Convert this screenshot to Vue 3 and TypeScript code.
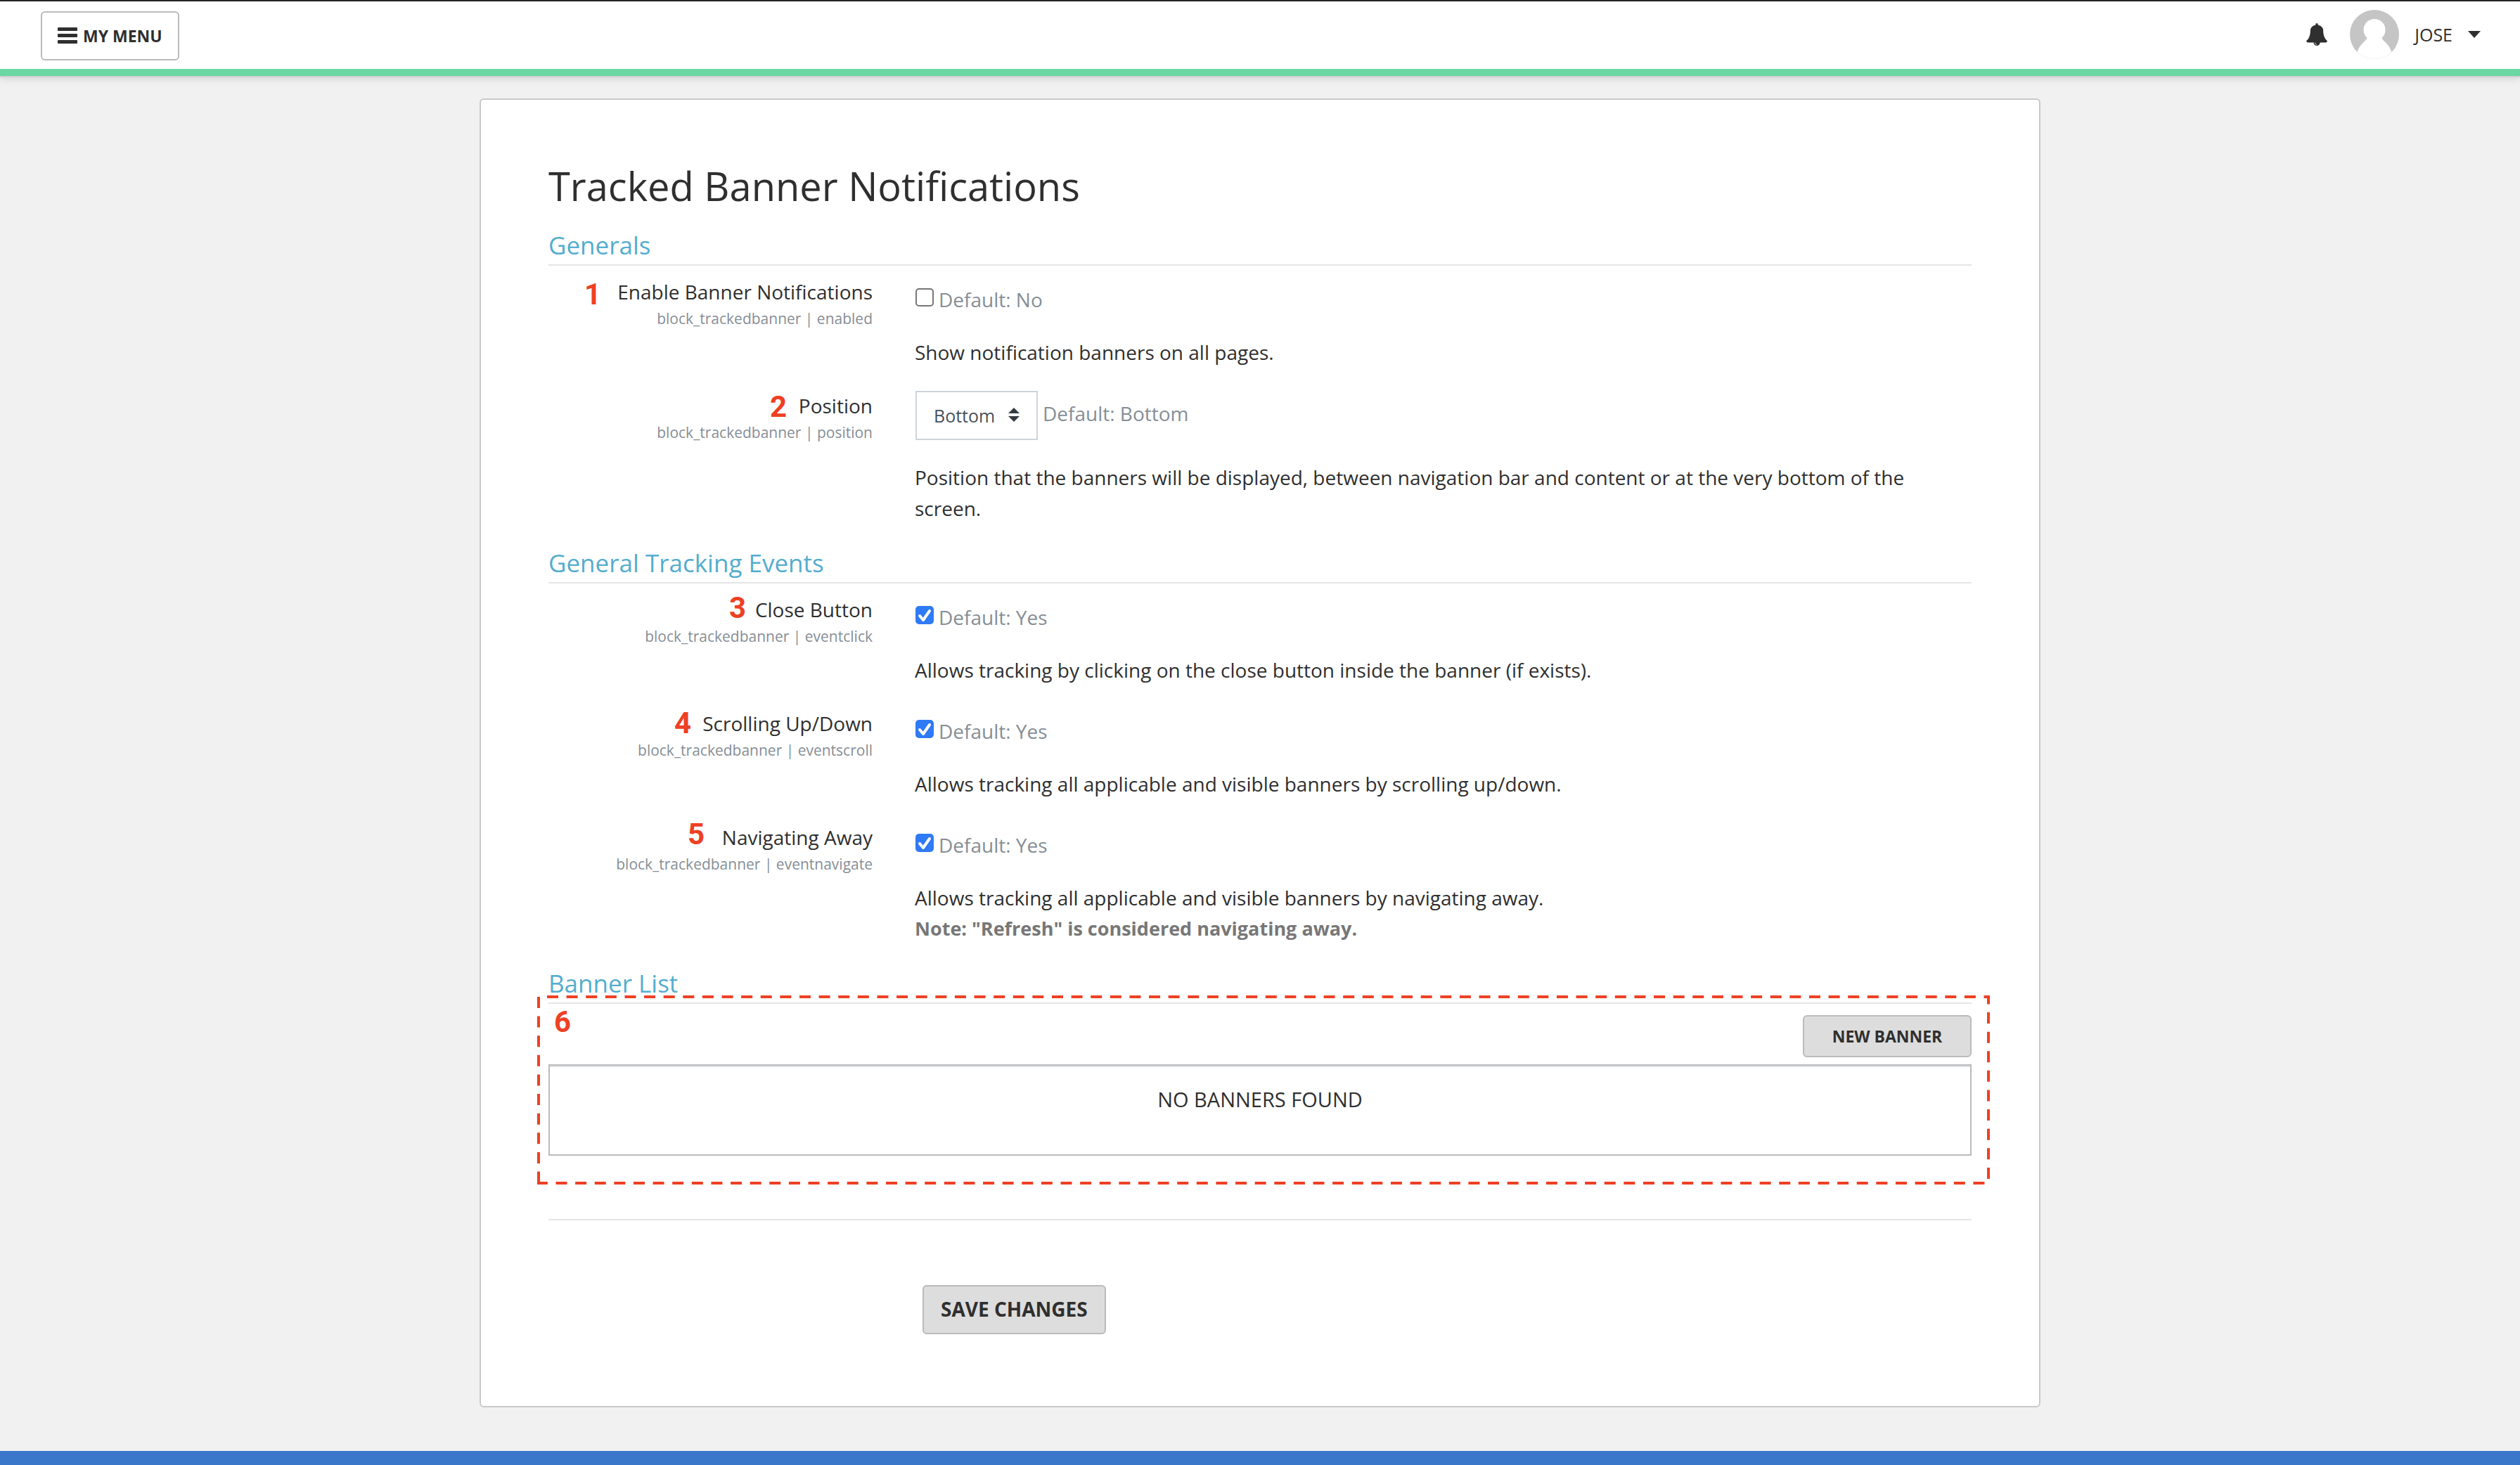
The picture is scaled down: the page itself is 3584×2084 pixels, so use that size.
<script setup lang="ts">
import { reactive } from 'vue'

interface Pin {
  n: number
  right: number
  top: number
}

interface Setting {
  id: string
  label: string
  kind: 'check' | 'select'
  fallback: string
  text: string
  note?: string
  pin: Pin
}

interface Section {
  title: string
  settings: Setting[]
}

const sections: Section[] = [
  {
    title: 'Generals',
    settings: [
      {
        id: 'enabled',
        label: 'Enable Banner Notifications',
        kind: 'check',
        fallback: 'No',
        text: 'Show notification banners on all pages.',
        pin: { n: 1, right: 386, top: 4 },
      },
      {
        id: 'position',
        label: 'Position',
        kind: 'select',
        fallback: 'Bottom',
        text: 'Position that the banners will be displayed, between navigation bar and content or at the very bottom of the screen.',
        pin: { n: 2, right: 122, top: 2 },
      },
    ],
  },
  {
    title: 'General Tracking Events',
    settings: [
      {
        id: 'eventclick',
        label: 'Close Button',
        kind: 'check',
        fallback: 'Yes',
        text: 'Allows tracking by clicking on the close button inside the banner (if exists).',
        pin: { n: 3, right: 180, top: -2 },
      },
      {
        id: 'eventscroll',
        label: 'Scrolling Up/Down',
        kind: 'check',
        fallback: 'Yes',
        text: 'Allows tracking all applicable and visible banners by scrolling up/down.',
        pin: { n: 4, right: 258, top: 0 },
      },
      {
        id: 'eventnavigate',
        label: 'Navigating Away',
        kind: 'check',
        fallback: 'Yes',
        text: 'Allows tracking all applicable and visible banners by navigating away.',
        note: 'Note: "Refresh" is considered navigating away.',
        pin: { n: 5, right: 239, top: -4 },
      },
    ],
  },
]

const checks = reactive<Record<string, boolean>>({
  enabled: false,
  eventclick: true,
  eventscroll: true,
  eventnavigate: true,
})
const choices = reactive<Record<string, string>>({ position: 'Bottom' })
</script>

<template>
  <div class="page">
    <header class="topbar">
      <button class="menu-btn" type="button">
        <svg width="28" height="24" viewBox="0 0 28 24" aria-hidden="true">
          <rect width="28" height="5" y="0" rx="1" />
          <rect width="28" height="5" y="9" rx="1" />
          <rect width="28" height="5" y="18" rx="1" />
        </svg>
        MY MENU
      </button>
      <div class="user-area">
        <button class="plain bell" type="button" aria-label="Notifications">
          <svg width="30" height="32" viewBox="64 0 1664 1792" aria-hidden="true">
            <path d="M912 1696q0-16-16-16-59 0-101.500-42.500t-42.500-101.500q0-16-16-16t-16 16q0 73 51.500 124.500t124.500 51.500q16 0 16-16zm816-288q0 52-38 90t-90 38h-448q0 106-75 181t-181 75-181-75-75-181h-448q-52 0-90-38t-38-90q50-42 91-88t85-119.500 74.500-158.500 50-206 19.500-260q0-152 117-282.500t307-158.500q-8-19-8-39 0-40 28-68t68-28 68 28 28 68q0 20-8 39 190 28 307 158.500t117 282.500q0 139 19.500 260t50 206 74.500 158.500 85 119.500 91 88z" />
          </svg>
        </button>
        <button class="plain user" type="button">
          <svg width="70" height="70" viewBox="0 0 70 70" aria-hidden="true">
            <clipPath id="avatar-clip"><circle cx="35" cy="35" r="35" /></clipPath>
            <g clip-path="url(#avatar-clip)">
              <rect width="70" height="70" fill="#c5c5c5" />
              <circle cx="35" cy="28.500" r="15.500" fill="#fff" />
              <path d="M10 72V62C13 50 20 47 25 40H45C50 47 57 50 60 62V72Z" fill="#fff" />
            </g>
          </svg>
          JOSE
          <svg class="caret" width="18" height="10" viewBox="0 0 18 10" aria-hidden="true">
            <path d="M0 0H18L9 10Z" />
          </svg>
        </button>
      </div>
    </header>

    <main class="main">
      <form class="card" @submit.prevent>
        <h1>Tracked Banner Notifications</h1>

        <section v-for="section in sections" :key="section.title">
          <h2>{{ section.title }}</h2>
          <div v-for="s in section.settings" :key="s.id" class="setting">
            <div class="name">
              <span class="pin" :style="{ right: s.pin.right + 'px', top: s.pin.top + 'px' }">{{ s.pin.n }}</span>
              <label :for="s.id">{{ s.label }}</label>
              <small>block_trackedbanner | {{ s.id }}</small>
            </div>
            <div class="value">
              <div class="control">
                <span v-if="s.kind === 'check'" class="check">
                  <input :id="s.id" v-model="checks[s.id]" type="checkbox" />
                  <svg v-if="checks[s.id]" width="26" height="26" viewBox="0 0 26 26" aria-hidden="true">
                    <path d="M6 14L11 20L20 7" />
                  </svg>
                </span>
                <span v-else class="select">
                  <select :id="s.id" v-model="choices[s.id]">
                    <option>Top</option>
                    <option>Bottom</option>
                  </select>
                  <svg width="16" height="20" viewBox="0 0 16 20" aria-hidden="true">
                    <path d="M0 8L8 0L16 8ZM0 12H16L8 20Z" />
                  </svg>
                </span>
                <span class="fallback">Default: {{ s.fallback }}</span>
              </div>
              <p>{{ s.text }}</p>
              <p v-if="s.note" class="note">{{ s.note }}</p>
            </div>
          </div>
        </section>

        <section>
          <h2>Banner List</h2>
          <div class="banners">
            <svg class="frame" aria-hidden="true">
              <line x1="12" y1="0" x2="100%" y2="0" />
              <line x1="100%" y1="-2" x2="100%" y2="100%" stroke-dashoffset="3.600" />
              <line x1="-2" y1="100%" x2="100%" y2="100%" stroke-dashoffset="1.100" />
              <line x1="0" y1="0" x2="0" y2="100%" />
            </svg>
            <span class="pin list-pin">6</span>
            <button class="btn new-btn" type="button">NEW BANNER</button>
            <table>
              <tbody>
                <tr>
                  <td>NO BANNERS FOUND</td>
                </tr>
              </tbody>
            </table>
          </div>
        </section>

        <hr />
        <div class="actions">
          <button class="btn save-btn" type="submit">SAVE CHANGES</button>
        </div>
      </form>
    </main>

    <footer class="footer"></footer>
  </div>
</template>

<style>
body {
  background: #f1f1f1;
}
</style>

<style scoped>
.page {
  min-height: 100vh;
  display: flex;
  flex-direction: column;
  font-family: "Open Sans", sans-serif;
  font-size: 28px;
  line-height: 44px;
  color: #2f2f2f;
}

.page *,
.page {
  box-sizing: border-box;
}

button,
select {
  font-family: inherit;
  color: inherit;
  cursor: pointer;
}

.topbar {
  position: relative;
  display: flex;
  justify-content: space-between;
  align-items: flex-start;
  height: 108px;
  padding: 14px 56px 0 58px;
  background: #fff;
  border-top: 2px solid #242424;
  border-bottom: 10px solid #6bd7a3;
  box-shadow: 0 2px 0 #d0d0d0, 0 4px 10px rgba(0, 0, 0, 0.12);
}

.menu-btn {
  display: flex;
  align-items: center;
  gap: 8px;
  height: 70px;
  padding: 0 22px;
  background: #fff;
  border: 2px solid #bbb;
  border-radius: 6px;
  font-size: 23px;
  font-weight: 700;
}

.menu-btn svg,
.bell svg,
.caret {
  fill: #2f2f2f;
}

.user-area {
  display: flex;
  align-items: center;
  gap: 32px;
  height: 66px;
}

.plain {
  display: flex;
  align-items: center;
  padding: 0;
  background: none;
  border: 0;
}

.user {
  gap: 22px;
  font-size: 25px;
}

.main {
  flex: 1;
  padding: 32px 40px 62px;
}

.card {
  max-width: 2220px;
  margin: 0 auto;
  padding: 90px 96px 102px;
  background: #fff;
  border: 2px solid #c9c9c9;
  border-radius: 6px;
}

h1 {
  margin: 0 0 30px;
  font-size: 56px;
  line-height: 64px;
  font-weight: 400;
}

h2 {
  margin: 0 0 16px;
  padding: 1px 0 5px;
  border-bottom: 2px solid #e5e5e5;
  font-size: 35px;
  line-height: 44px;
  font-weight: 400;
  color: #54adcf;
}

.setting {
  display: grid;
  grid-template-columns: repeat(4, 1fr);
  column-gap: 60px;
  margin-bottom: 33px;
}

.name {
  position: relative;
  display: flex;
  flex-direction: column;
  align-items: flex-end;
}

.name label {
  line-height: 43px;
}

.name small {
  font-size: 21px;
  line-height: 32px;
  color: #868e96;
}

.pin {
  position: absolute;
  font-family: Roboto, sans-serif;
  font-size: 42px;
  line-height: 42px;
  font-weight: 700;
  color: #ee4024;
}

.value {
  grid-column: span 3;
}

.control {
  display: flex;
  align-items: flex-start;
  gap: 7px;
  margin-bottom: 31px;
  padding-left: 1px;
}

.check {
  position: relative;
  width: 26px;
  height: 26px;
  margin-top: 16px;
}

.check input {
  appearance: none;
  display: block;
  width: 26px;
  height: 26px;
  margin: 0;
  background: #fff;
  border: 2px solid #767676;
  border-radius: 5px;
}

.check input:checked {
  background: #2f7af6;
  border-color: #2f7af6;
}

.check svg {
  position: absolute;
  inset: 0;
  fill: none;
  stroke: #fff;
  stroke-width: 4;
  stroke-linecap: round;
  stroke-linejoin: round;
  pointer-events: none;
}

.select {
  position: relative;
}

.select select {
  appearance: none;
  display: block;
  width: 174px;
  height: 70px;
  padding: 0 24px;
  background: #fff;
  border: 2px solid #ced4da;
  border-radius: 0;
  font-size: 25px;
  color: #495057;
}

.select svg {
  position: absolute;
  top: 24px;
  right: 26px;
  fill: #343a40;
  pointer-events: none;
}

.fallback {
  margin-top: 10px;
  font-size: 28px;
  color: #868e96;
}

p {
  margin: 0;
}

.note {
  font-size: 27px;
  font-weight: 700;
  color: #777;
}

.banners {
  position: relative;
  display: flex;
  flex-direction: column;
  align-items: flex-end;
  gap: 10px;
}

.frame {
  position: absolute;
  top: -26px;
  left: -14px;
  width: calc(100% + 38px);
  height: 265px;
  overflow: visible;
  stroke: #ee4024;
  stroke-width: 4;
  stroke-dasharray: 16 11.615;
  pointer-events: none;
}

.list-pin {
  top: -11px;
  left: 8px;
}

.btn {
  background: #ddd;
  border: 2px solid #bbb;
  border-radius: 6px;
  font-weight: 700;
}

.new-btn {
  width: 240px;
  height: 60px;
  padding: 0;
  font-size: 23px;
}

table {
  width: 100%;
  height: 130px;
  border: 2px solid #bbb;
  border-spacing: 0;
}

td {
  padding: 24px 20px;
  border-top: 2px solid #dee2e6;
  font-size: 29px;
  text-align: center;
  vertical-align: top;
}

hr {
  margin: 90px 0 92px;
  border: 0;
  border-top: 2px solid #e5e5e5;
}

.actions {
  display: grid;
  grid-template-columns: repeat(4, 1fr);
  column-gap: 60px;
}

.save-btn {
  grid-column: 2 / span 3;
  justify-self: start;
  height: 70px;
  margin-left: 11px;
  padding: 0 24px 2px;
  font-size: 28px;
}

.footer {
  height: 20px;
  background: #3a77cb;
}
</style>
